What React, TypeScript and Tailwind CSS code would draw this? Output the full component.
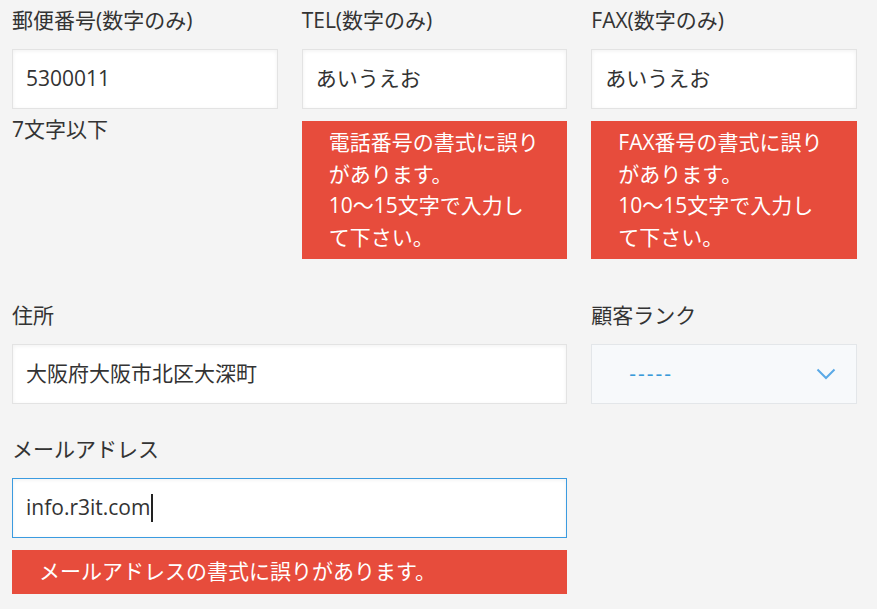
import React from "react";

type FieldProps = {
  label: string;
  value: string;
  focused?: boolean;
  className?: string;
  children?: React.ReactNode;
};

function Field({ label, value, focused, className, children }: FieldProps) {
  return (
    <div className={className}>
      <div className="h-[30px] leading-[30px] text-[#333]">{label}</div>
      <div
        className={
          "mt-[14px] flex h-[60px] items-center bg-white px-[13px] shadow-[inset_0_1px_4px_rgba(0,0,0,0.06)] " +
          (focused ? "border border-[#3b9be0]" : "border border-[#e3e3e3]")
        }
      >
        <span className="text-[#333]">{value}</span>
        {focused && <span className="ml-[1px] h-[28px] w-[2px] bg-[#222]" />}
      </div>
      {children}
    </div>
  );
}

function ErrorBox({ lines, className }: { lines: string[]; className?: string }) {
  return (
    <div className={"mt-3 bg-[#e74c3c] py-[6px] pl-[27px] leading-[31.5px] text-white " + className}>
      {lines.map((line) => (
        <div key={line}>{line}</div>
      ))}
    </div>
  );
}

export default function App() {
  return (
    <div
      className="min-h-screen bg-[#f4f4f4] pl-3 pt-[5px] text-[21px]"
      style={{ fontFamily: "'Open Sans', 'Noto Sans CJK JP', sans-serif" }}
    >
      <div className="grid w-[845px] grid-cols-3 gap-x-6 gap-y-[30px]">
        {/* row 1 */}
        <Field label="郵便番号(数字のみ)" value="5300011">
          <div className="mt-[4px] leading-[32px] text-[#333]">7文字以下</div>
        </Field>
        <Field label="TEL(数字のみ)" value="あいうえお">
          <ErrorBox
            className="mb-[11px]"
            lines={["電話番号の書式に誤り", "があります。", "10〜15文字で入力し", "て下さい。"]}
          />
        </Field>
        <Field label="FAX(数字のみ)" value="あいうえお">
          <ErrorBox
            className="mb-[11px]"
            lines={["FAX番号の書式に誤り", "があります。", "10〜15文字で入力し", "て下さい。"]}
          />
        </Field>

        {/* row 2 */}
        <Field className="col-span-2" label="住所" value="大阪府大阪市北区大深町" />
        <div>
          <div className="h-[30px] leading-[30px] text-[#333]">顧客ランク</div>
          <div className="mt-[14px] flex h-[60px] items-center justify-between border border-[#e3e6e9] bg-[#f7f9fb] pl-[37px] pr-[20px]">
            <span className="tracking-[2px] text-[#3a9ad9]">-----</span>
            <svg width="20" height="12" viewBox="0 0 20 12" fill="none">
              <path d="M1.5 1.5 L10 10 L18.5 1.5" stroke="#5aa9e6" strokeWidth="2" />
            </svg>
          </div>
        </div>

        {/* row 3 */}
        <Field className="col-span-2" label="メールアドレス" value="info.r3it.com" focused>
          <ErrorBox lines={["メールアドレスの書式に誤りがあります。"]} />
        </Field>
      </div>
    </div>
  );
}
